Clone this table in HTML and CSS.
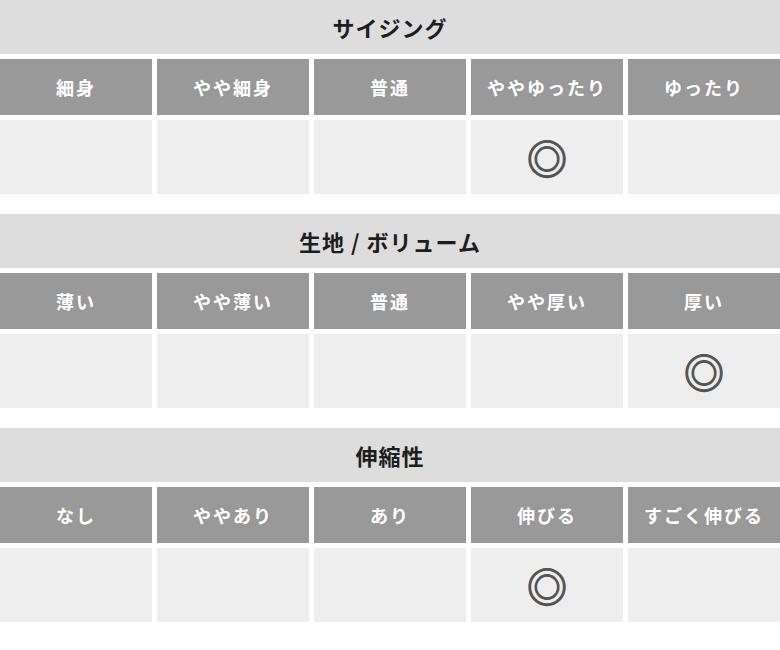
FILE: index.html
```html
<!DOCTYPE html>
<html lang="ja">
<head>
<meta charset="utf-8">
<title>サイズ表</title>
<link rel="stylesheet" href="styles.css">
</head>
<body>
<div class="sheet">
  <section class="spec">
    <h2 class="spec-title">サイジング</h2>
    <div class="spec-grid">
      <div class="cell-head">細身</div>
      <div class="cell-head">やや細身</div>
      <div class="cell-head">普通</div>
      <div class="cell-head">ややゆったり</div>
      <div class="cell-head">ゆったり</div>
      <div class="cell-val"></div>
      <div class="cell-val"></div>
      <div class="cell-val"></div>
      <div class="cell-val"><span class="mark">◎</span></div>
      <div class="cell-val"></div>
    </div>
  </section>
  <section class="spec">
    <h2 class="spec-title">生地 / ボリューム</h2>
    <div class="spec-grid">
      <div class="cell-head">薄い</div>
      <div class="cell-head">やや薄い</div>
      <div class="cell-head">普通</div>
      <div class="cell-head">やや厚い</div>
      <div class="cell-head">厚い</div>
      <div class="cell-val"></div>
      <div class="cell-val"></div>
      <div class="cell-val"></div>
      <div class="cell-val"></div>
      <div class="cell-val"><span class="mark">◎</span></div>
    </div>
  </section>
  <section class="spec">
    <h2 class="spec-title">伸縮性</h2>
    <div class="spec-grid">
      <div class="cell-head">なし</div>
      <div class="cell-head">ややあり</div>
      <div class="cell-head">あり</div>
      <div class="cell-head">伸びる</div>
      <div class="cell-head">すごく伸びる</div>
      <div class="cell-val"></div>
      <div class="cell-val"></div>
      <div class="cell-val"></div>
      <div class="cell-val"><span class="mark">◎</span></div>
      <div class="cell-val"></div>
    </div>
  </section>
</div>
</body>
</html>
```
FILE: styles.css
```css
html, body {
  margin: 0;
  padding: 0;
  background: #ffffff;
}
body {
  font-family: "Noto Sans CJK JP", "Noto Sans", sans-serif;
  width: 780px;
}
.sheet {
  display: flex;
  flex-direction: column;
  gap: 20px;
}
.spec {
  display: flex;
  flex-direction: column;
  gap: 5px;
}
.spec-title {
  margin: 0;
  height: 54px;
  display: flex;
  align-items: center;
  justify-content: center;
  background: #dddddd;
  color: #1e1e1e;
  font-size: 22px;
  font-weight: 700;
  letter-spacing: 1px;
}
.spec-grid {
  display: grid;
  grid-template-columns: repeat(5, 1fr);
  grid-template-rows: 56px 74px;
  gap: 5px;
}
.cell-head {
  display: flex;
  align-items: center;
  justify-content: center;
  background: #999999;
  color: #ffffff;
  font-size: 18px;
  font-weight: 700;
  letter-spacing: 2px;
}
.cell-val {
  display: flex;
  align-items: center;
  justify-content: center;
  background: #eeeeee;
}
.mark {
  font-size: 40px;
  line-height: 1;
  color: #555555;
  -webkit-text-stroke: 1.3px #555555;
}
```
